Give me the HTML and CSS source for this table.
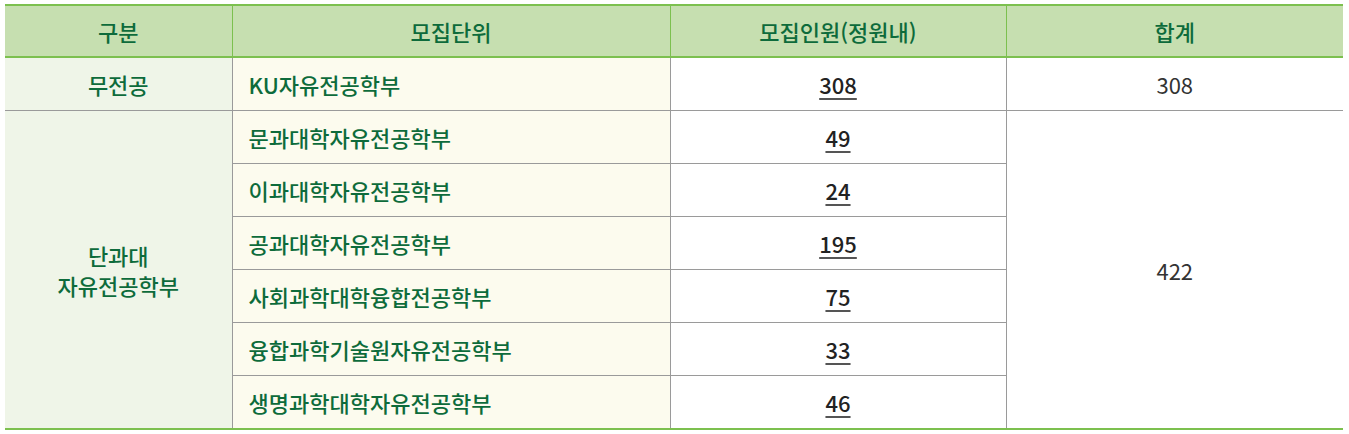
FILE: index.html
```html
<!DOCTYPE html>
<html lang="ko">
<head>
<meta charset="utf-8">
<link rel="stylesheet" href="styles.css">
</head>
<body>
<table class="quota">
  <colgroup>
    <col class="c1"><col class="c2"><col class="c3"><col class="c4">
  </colgroup>
  <thead>
    <tr>
      <th>구분</th>
      <th>모집단위</th>
      <th>모집인원(정원내)</th>
      <th>합계</th>
    </tr>
  </thead>
  <tbody>
    <tr>
      <td class="cat">무전공</td>
      <td class="unit">KU자유전공학부</td>
      <td class="num"><a href="#">308</a></td>
      <td class="sum">308</td>
    </tr>
    <tr>
      <td class="cat" rowspan="6">단과대<br>자유전공학부</td>
      <td class="unit">문과대학자유전공학부</td>
      <td class="num"><a href="#">49</a></td>
      <td class="sum" rowspan="6">422</td>
    </tr>
    <tr>
      <td class="unit">이과대학자유전공학부</td>
      <td class="num"><a href="#">24</a></td>
    </tr>
    <tr>
      <td class="unit">공과대학자유전공학부</td>
      <td class="num"><a href="#">195</a></td>
    </tr>
    <tr>
      <td class="unit">사회과학대학융합전공학부</td>
      <td class="num"><a href="#">75</a></td>
    </tr>
    <tr>
      <td class="unit">융합과학기술원자유전공학부</td>
      <td class="num"><a href="#">33</a></td>
    </tr>
    <tr>
      <td class="unit">생명과학대학자유전공학부</td>
      <td class="num"><a href="#">46</a></td>
    </tr>
  </tbody>
</table>
</body>
</html>
```

FILE: styles.css
```css
html, body {
  margin: 0;
  padding: 0;
  background: #ffffff;
}

body {
  padding: 4px 0 0 5px;
  font-family: "Noto Sans CJK KR", "Noto Sans", sans-serif;
}

.quota {
  border-collapse: collapse;
  table-layout: fixed;
  width: 1338px;
  border-top: 2px solid #7cc04f;
  border-bottom: 2px solid #7cc04f;
  font-size: 22px;
  line-height: 30px;
}

.c1 { width: 227px; }
.c2 { width: 438px; }
.c3 { width: 336px; }
.c4 { width: 337px; }

.quota th {
  background: #c6dfb0;
  color: #0d6b3b;
  font-weight: 500;
  height: 50px;
  padding: 0;
  border-left: 1px solid #7cc04f;
  border-bottom: 2px solid #7cc04f;
  text-align: center;
  vertical-align: middle;
}

.quota th:first-child {
  border-left: none;
}

.quota td {
  height: 52px;
  padding: 0;
  border: 1px solid #9a9a9a;
  vertical-align: middle;
  text-align: center;
}

.quota tr td:first-child {
  border-left: none;
}

.quota td.sum {
  border-right: none;
  color: #333333;
  font-weight: 400;
  background: #ffffff;
}

.quota tbody tr:last-child td,
.quota td[rowspan] {
  border-bottom: none;
}

.cat {
  background: #eff5e8;
  color: #0d6b3b;
  font-weight: 500;
}

.unit {
  background: #fcfbee;
  color: #0d6b3b;
  font-weight: 500;
  text-align: left !important;
  padding-left: 16px !important;
}

.num {
  background: #ffffff;
}

.num a {
  color: #222222;
  font-weight: 500;
  text-decoration: underline;
  text-decoration-color: #555555;
  text-underline-offset: 4px;
  text-decoration-thickness: 2px;
}
```
